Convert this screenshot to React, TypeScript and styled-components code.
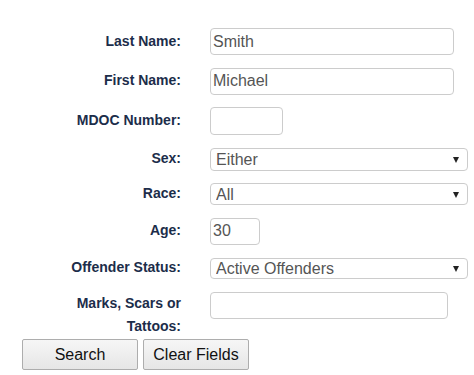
import React, { useState } from 'react';
import styled, { createGlobalStyle } from 'styled-components';

const GlobalStyle = createGlobalStyle`
  html, body {
    margin: 0;
    padding: 0;
    background: #ffffff;
  }
  body {
    font-family: "Liberation Sans", Arial, sans-serif;
  }
`;

const Page = styled.div`
  width: 474px;
  height: 375px;
  overflow: hidden;
  padding-top: 28px;
  box-sizing: border-box;
`;

const Fields = styled.div`
  display: grid;
  grid-template-columns: 181px 1fr;
  column-gap: 29px;
  row-gap: 12.6px;
  align-items: center;
`;

const Label = styled.label<{ $multi?: boolean }>`
  text-align: right;
  font-size: 14px;
  font-weight: bold;
  color: #1c2d4a;
  line-height: ${p => (p.$multi ? '23px' : '16px')};
  align-self: ${p => (p.$multi ? 'start' : 'center')};
  margin-top: ${p => (p.$multi ? '1px' : '-2px')};
`;

const TextInput = styled.input<{ $w: number; $h?: number }>`
  box-sizing: border-box;
  width: ${p => p.$w}px;
  height: ${p => p.$h ?? 27}px;
  border: 1px solid #cccccc;
  border-radius: 4px;
  padding: 0 2px;
  font-family: "Liberation Sans", Arial, sans-serif;
  font-size: 16px;
  color: #555555;
  background: #ffffff;
  outline: none;
`;

const MultiInput = styled(TextInput)`
  align-self: start;
  margin-top: 1px;
`;

const SelectWrap = styled.div<{ $h: number }>`
  position: relative;
  width: 258px;
  height: ${p => p.$h}px;
`;

const Select = styled.select`
  box-sizing: border-box;
  width: 100%;
  height: 100%;
  appearance: none;
  -webkit-appearance: none;
  border: 1px solid #cccccc;
  border-radius: 4px;
  padding: 0 20px 0 5px;
  font-family: "Liberation Sans", Arial, sans-serif;
  font-size: 16px;
  color: #555555;
  background: #ffffff;
  outline: none;
`;

const Arrow = styled.span`
  position: absolute;
  right: 9px;
  top: 50%;
  margin-top: -2px;
  width: 0;
  height: 0;
  border-left: 3.5px solid transparent;
  border-right: 3.5px solid transparent;
  border-top: 6px solid #222222;
  pointer-events: none;
`;

const Buttons = styled.div`
  display: flex;
  gap: 5px;
  padding-left: 22px;
  margin-top: 1px;
`;

const Button = styled.button<{ $w: number }>`
  box-sizing: border-box;
  width: ${p => p.$w}px;
  height: 31px;
  border: 1px solid #adadad;
  border-radius: 2px;
  background: linear-gradient(#f6f6f6, #e6e6e6);
  font-family: "Liberation Sans", Arial, sans-serif;
  font-size: 16px;
  color: #111111;
  padding: 0;
`;

const Dropdown = ({ h, value, options }: { h: number; value: string; options: string[] }) => (
  <SelectWrap $h={h}>
    <Select defaultValue={value}>
      {options.map(o => (
        <option key={o}>{o}</option>
      ))}
    </Select>
    <Arrow />
  </SelectWrap>
);

const App = (): JSX.Element => {
  const [last, setLast] = useState<string>('Smith');
  const [first, setFirst] = useState<string>('Michael');
  const [age, setAge] = useState<string>('30');

  return (
    <Page>
      <GlobalStyle />
      <Fields>
        <Label>Last Name:</Label>
        <TextInput $w={244} value={last} onChange={e => setLast(e.target.value)} />

        <Label>First Name:</Label>
        <TextInput $w={244} value={first} onChange={e => setFirst(e.target.value)} />

        <Label>MDOC Number:</Label>
        <TextInput $w={73} $h={28} />

        <Label>Sex:</Label>
        <Dropdown h={23} value="Either" options={['Either', 'Male', 'Female']} />

        <Label>Race:</Label>
        <Dropdown h={22} value="All" options={['All', 'White', 'Black', 'Other']} />

        <Label>Age:</Label>
        <TextInput $w={50} value={age} onChange={e => setAge(e.target.value)} />

        <Label>Offender Status:</Label>
        <Dropdown h={21} value="Active Offenders" options={['Active Offenders', 'Inactive Offenders', 'All']} />

        <Label $multi>
          Marks, Scars or
          <br />
          Tattoos:
        </Label>
        <MultiInput $w={238} />
      </Fields>
      <Buttons>
        <Button $w={116}>Search</Button>
        <Button $w={106}>Clear Fields</Button>
      </Buttons>
    </Page>
  );
};

export default App;
